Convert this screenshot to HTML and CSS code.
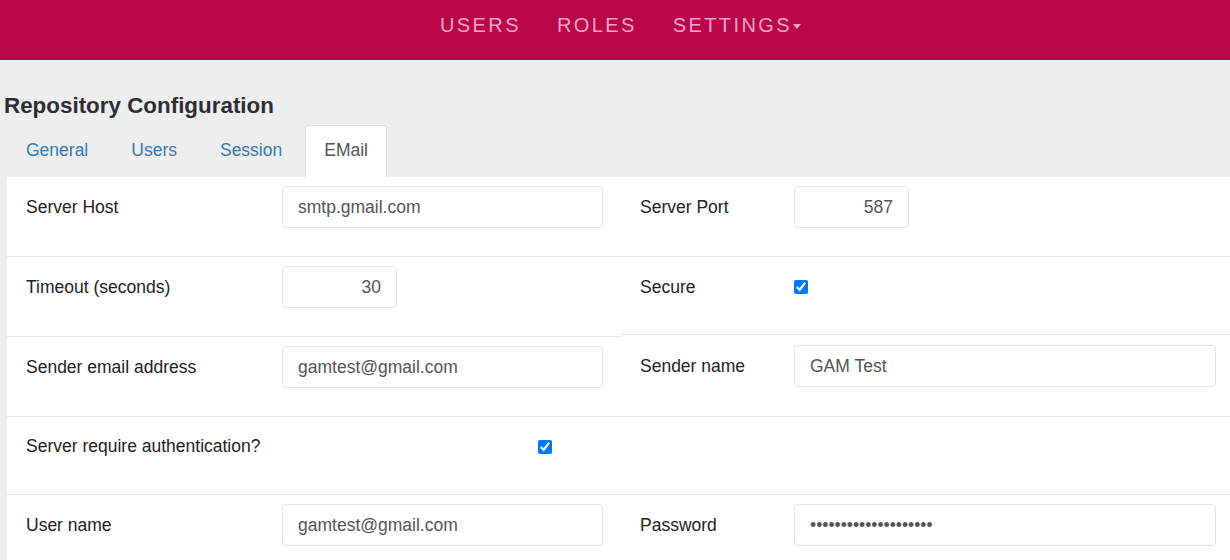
FILE: index.html
```html
<!DOCTYPE html>
<html>
<head>
<meta charset="utf-8">
<link rel="stylesheet" href="styles.css">
</head>
<body>
<header class="topbar">
  <nav class="nav">
    <a class="nav-item">USERS</a>
    <a class="nav-item">ROLES</a>
    <a class="nav-item">SETTINGS<span class="caret"></span></a>
  </nav>
</header>
<main class="content">
  <h1 class="title">Repository Configuration</h1>
  <ul class="tabs">
    <li class="tab">General</li>
    <li class="tab">Users</li>
    <li class="tab">Session</li>
    <li class="tab active">EMail</li>
  </ul>
  <section class="panel">
    <div class="row">
      <div class="cell left">
        <label class="lbl">Server Host</label>
        <input class="inp wide" type="text" value="smtp.gmail.com">
      </div>
      <div class="cell right">
        <label class="lbl lbl-r">Server Port</label>
        <input class="inp num" type="text" value="587">
      </div>
    </div>
    <div class="row">
      <div class="cell left">
        <label class="lbl">Timeout (seconds)</label>
        <input class="inp num" type="text" value="30">
      </div>
      <div class="cell right short">
        <label class="lbl lbl-r">Secure</label>
        <input class="chk" type="checkbox" checked>
      </div>
    </div>
    <div class="row">
      <div class="cell left">
        <label class="lbl">Sender email address</label>
        <input class="inp wide" type="text" value="gamtest@gmail.com">
      </div>
      <div class="cell right tall">
        <label class="lbl lbl-r">Sender name</label>
        <input class="inp wider" type="text" value="GAM Test">
      </div>
    </div>
    <div class="row">
      <div class="cell left auth">
        <label class="lbl lbl-long">Server require authentication?</label>
        <input class="chk" type="checkbox" checked>
      </div>
      <div class="cell right auth"></div>
    </div>
    <div class="row">
      <div class="cell left">
        <label class="lbl">User name</label>
        <input class="inp wide" type="text" value="gamtest@gmail.com">
      </div>
      <div class="cell right">
        <label class="lbl lbl-r">Password</label>
        <input class="inp wider" type="password" value="abcdefghijklmnopqrst">
      </div>
    </div>
  </section>
</main>
</body>
</html>
```
FILE: styles.css
```css
* { box-sizing: border-box; }
html, body {
  margin: 0;
  padding: 0;
  background: #eeeeee;
  font-family: "Liberation Sans", Arial, sans-serif;
  overflow: hidden;
}
.topbar {
  height: 60px;
  background: #ba0748;
}
.nav {
  display: flex;
  justify-content: center;
  padding-left: 11px;
  padding-top: 13px;
  gap: 36px;
}
.nav-item {
  display: flex;
  align-items: center;
  font-size: 20px;
  line-height: 24px;
  letter-spacing: 2.4px;
  color: #f5a3c7;
  text-decoration: none;
}
.caret {
  display: inline-block;
  width: 0;
  height: 0;
  margin-left: 1px;
  margin-top: 2px;
  border-top: 5px solid #f5a3c7;
  border-left: 4.5px solid transparent;
  border-right: 4.5px solid transparent;
}
.content {
  padding-left: 7px;
}
.title {
  margin: 34px 0 7px -3px;
  font-size: 22.4px;
  line-height: 24px;
  font-weight: bold;
  color: #2d2d35;
}
.tabs {
  display: flex;
  list-style: none;
  margin: 0;
  padding: 0;
  gap: 5px;
}
.tab {
  padding: 14px 18px 17px;
  border: 1px solid transparent;
  border-bottom: none;
  border-radius: 4px 4px 0 0;
  font-size: 17.5px;
  line-height: 20px;
  color: #337ab7;
}
.tab.active {
  margin-left: -1px;
  background: #ffffff;
  border-color: #dddddd;
  color: #555555;
}
.panel {
  background: #ffffff;
  min-height: 400px;
}
.row {
  display: flex;
}
.cell {
  display: flex;
  align-items: center;
  min-height: 79px;
  padding: 9px 0 28px 19px;
  border-bottom: 1px solid #e6e6e6;
}
.cell.left {
  width: 614px;
}
.cell.right {
  flex: 1;
}
.cell.short { min-height: 77px; padding-bottom: 26px; margin-bottom: 2px; }
.cell.tall { min-height: 82px; padding-top: 10px; padding-bottom: 29px; margin-top: -2px; }
.cell.auth { min-height: 78px; padding-bottom: 27px; }
.lbl {
  width: 256px;
  flex: none;
  font-size: 17.5px;
  color: #222222;
}
.lbl-r { width: 154px; }
.lbl-long { width: 512px; }
.inp {
  height: 42px;
  padding: 0 15px;
  border: 1px solid #e2e2e2;
  border-radius: 4px;
  font-family: "Liberation Sans", Arial, sans-serif;
  font-size: 17.5px;
  color: #555555;
  background: #ffffff;
  outline: none;
}
.inp.wide { width: 321px; }
.inp.wider { width: 422px; }
.inp.num { width: 115px; text-align: right; }
.chk {
  margin: 0;
  width: 14px;
  height: 14px;
  accent-color: #0075ff;
}
```
